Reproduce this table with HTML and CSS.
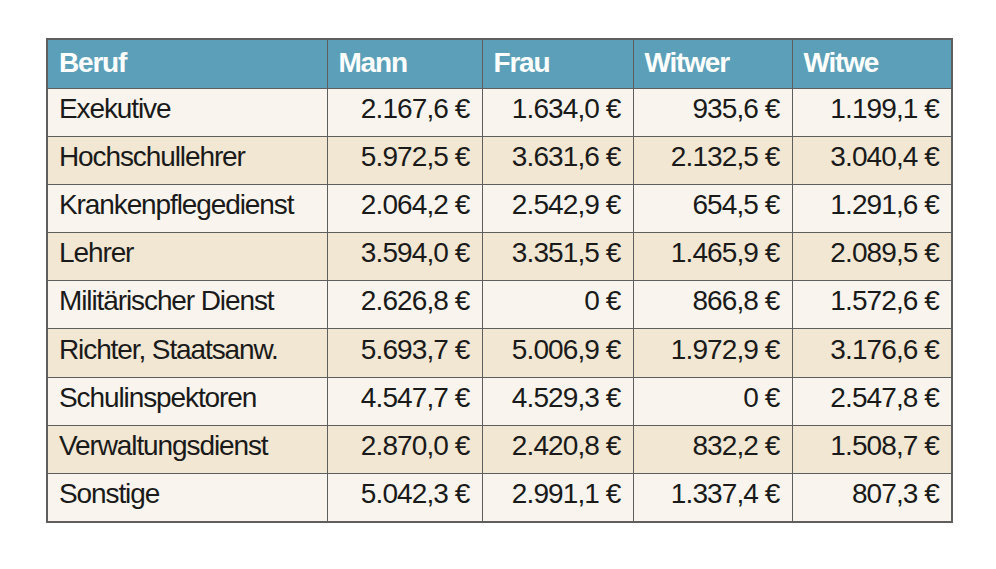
FILE: index.html
```html
<!DOCTYPE html>
<html lang="de">
<head>
<meta charset="utf-8">
<title>Beruf</title>
<link rel="stylesheet" href="styles.css">
</head>
<body>
<table class="data">
  <colgroup>
    <col class="c-beruf">
    <col class="c-mann">
    <col class="c-frau">
    <col class="c-witwer">
    <col class="c-witwe">
  </colgroup>
  <thead>
    <tr><th>Beruf</th><th>Mann</th><th>Frau</th><th>Witwer</th><th>Witwe</th></tr>
  </thead>
  <tbody>
    <tr><td>Exekutive</td><td class="num">2.167,6 €</td><td class="num">1.634,0 €</td><td class="num">935,6 €</td><td class="num">1.199,1 €</td></tr>
    <tr><td>Hochschullehrer</td><td class="num">5.972,5 €</td><td class="num">3.631,6 €</td><td class="num">2.132,5 €</td><td class="num">3.040,4 €</td></tr>
    <tr><td>Krankenpflegedienst</td><td class="num">2.064,2 €</td><td class="num">2.542,9 €</td><td class="num">654,5 €</td><td class="num">1.291,6 €</td></tr>
    <tr><td>Lehrer</td><td class="num">3.594,0 €</td><td class="num">3.351,5 €</td><td class="num">1.465,9 €</td><td class="num">2.089,5 €</td></tr>
    <tr><td>Militärischer Dienst</td><td class="num">2.626,8 €</td><td class="num">0 €</td><td class="num">866,8 €</td><td class="num">1.572,6 €</td></tr>
    <tr><td>Richter, Staatsanw.</td><td class="num">5.693,7 €</td><td class="num">5.006,9 €</td><td class="num">1.972,9 €</td><td class="num">3.176,6 €</td></tr>
    <tr><td>Schulinspektoren</td><td class="num">4.547,7 €</td><td class="num">4.529,3 €</td><td class="num">0 €</td><td class="num">2.547,8 €</td></tr>
    <tr><td>Verwaltungsdienst</td><td class="num">2.870,0 €</td><td class="num">2.420,8 €</td><td class="num">832,2 €</td><td class="num">1.508,7 €</td></tr>
    <tr><td>Sonstige</td><td class="num">5.042,3 €</td><td class="num">2.991,1 €</td><td class="num">1.337,4 €</td><td class="num">807,3 €</td></tr>
  </tbody>
</table>
</body>
</html>
```

FILE: styles.css
```css
html, body {
  margin: 0;
  padding: 0;
  background: #ffffff;
}

body {
  padding: 38px 0 0 46px;
  font-family: "Liberation Sans", Arial, sans-serif;
}

.data {
  border-collapse: collapse;
  table-layout: fixed;
  width: 905px;
  border: 2px solid #5e5e5e;
}

.c-beruf { width: 280px; }
.c-mann { width: 155px; }
.c-frau { width: 151px; }
.c-witwer { width: 159px; }
.c-witwe { width: 160px; }

.data th,
.data td {
  border: 1.5px solid #5e5e5e;
  white-space: nowrap;
  overflow: hidden;
  box-sizing: border-box;
}

.data th {
  height: 49px;
  background: #5c9fb8;
  color: #ffffff;
  font-weight: bold;
  font-size: 28px;
  letter-spacing: -1.2px;
  text-align: left;
  padding: 0 11px 1px 11px;
  line-height: 1;
}

.data td {
  height: 48.2px;
  color: #1a1a1a;
  font-size: 28px;
  letter-spacing: -1.1px;
  padding: 0 12px 7px 11px;
  line-height: 1;
}

.data tbody tr:nth-child(odd) td {
  background: #f9f5ee;
}

.data tbody tr:nth-child(even) td {
  background: #f1e7d3;
}

.data td.num {
  text-align: right;
  letter-spacing: -0.9px;
  padding-right: 12px;
}
```
